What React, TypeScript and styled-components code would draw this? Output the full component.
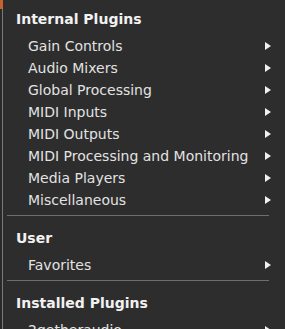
import React from "react";
import styled, { createGlobalStyle } from "styled-components";

const Global = createGlobalStyle`
  html, body {
    margin: 0;
    padding: 0;
    background: #2d2d2d;
    overflow: hidden;
  }
  body {
    font-family: "DejaVu Sans", Verdana, sans-serif;
  }
`;

const Frame = styled.div`
  display: flex;
  width: 285px;
  height: 329px;
  overflow: hidden;
  background: #2d2d2d;
`;

const LeftEdge = styled.div`
  display: flex;
  flex-direction: column;
  width: 2px;
  flex: 0 0 2px;
  background: #2a2a2a;
  border-right: 1px solid #7a7a7a;
`;

const OrangeTab = styled.div`
  height: 9px;
  width: 3px;
  background: #c4632c;
`;

const Menu = styled.div`
  flex: 1;
  display: flex;
  flex-direction: column;
  padding-top: 8px;
`;

const Heading = styled.div<{ $first?: boolean }>`
  font-weight: bold;
  font-size: 14px;
  line-height: 22px;
  color: #f2f2f2;
  padding: ${(p) => (p.$first ? "0" : "8px")} 0 5px 13px;
`;

const Item = styled.div`
  display: flex;
  align-items: center;
  justify-content: space-between;
  height: 22px;
  font-size: 14px;
  color: #e2e2e2;
  padding: 0 14px 0 25px;
  white-space: nowrap;
  flex-shrink: 0;
`;

const Separator = styled.div`
  height: 1px;
  background: #6e6e6e;
  margin: 4px 16px 3px 4px;
  flex-shrink: 0;
`;

const Arrow = () => (
  <svg width="6" height="8" viewBox="0 0 6 8">
    <polygon points="0,0 6,4 0,8" fill="#f0f0f0" />
  </svg>
);

const sections: { title: string; items: string[] }[] = [
  {
    title: "Internal Plugins",
    items: [
      "Gain Controls",
      "Audio Mixers",
      "Global Processing",
      "MIDI Inputs",
      "MIDI Outputs",
      "MIDI Processing and Monitoring",
      "Media Players",
      "Miscellaneous",
    ],
  },
  { title: "User", items: ["Favorites"] },
  { title: "Installed Plugins", items: ["2getheraudio"] },
];

export default function App() {
  return (
    <>
      <Global />
      <Frame>
        <LeftEdge>
          <OrangeTab />
        </LeftEdge>
        <Menu>
          {sections.map((s, i) => (
            <React.Fragment key={s.title}>
              {i > 0 && <Separator />}
              <Heading $first={i === 0}>{s.title}</Heading>
              {s.items.map((it) => (
                <Item key={it}>
                  <span>{it}</span>
                  <Arrow />
                </Item>
              ))}
            </React.Fragment>
          ))}
        </Menu>
      </Frame>
    </>
  );
}
